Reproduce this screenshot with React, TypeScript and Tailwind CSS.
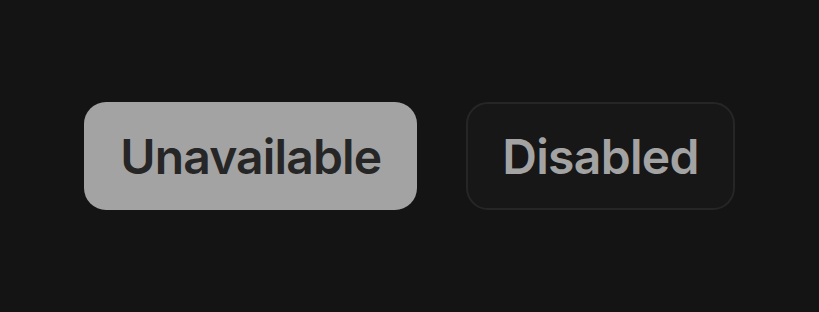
export default function App() {
  return (
    <div className="w-[819px] h-[312px] bg-[#141414] flex items-center justify-center gap-[49px] font-['Inter',sans-serif]">
      <button
        disabled
        className="h-[108px] px-[36px] pt-[2px] rounded-[22px] bg-[#a3a3a3] text-[#262626] text-[48px] font-semibold tracking-[-0.85px] leading-none"
      >
        Unavailable
      </button>
      <button
        disabled
        className="h-[108px] px-[34px] pt-[2px] rounded-[22px] bg-[#171717] border-2 border-[#262626] text-[#a3a3a3] text-[48px] font-semibold tracking-[-0.7px] leading-none"
      >
        Disabled
      </button>
    </div>
  )
}
